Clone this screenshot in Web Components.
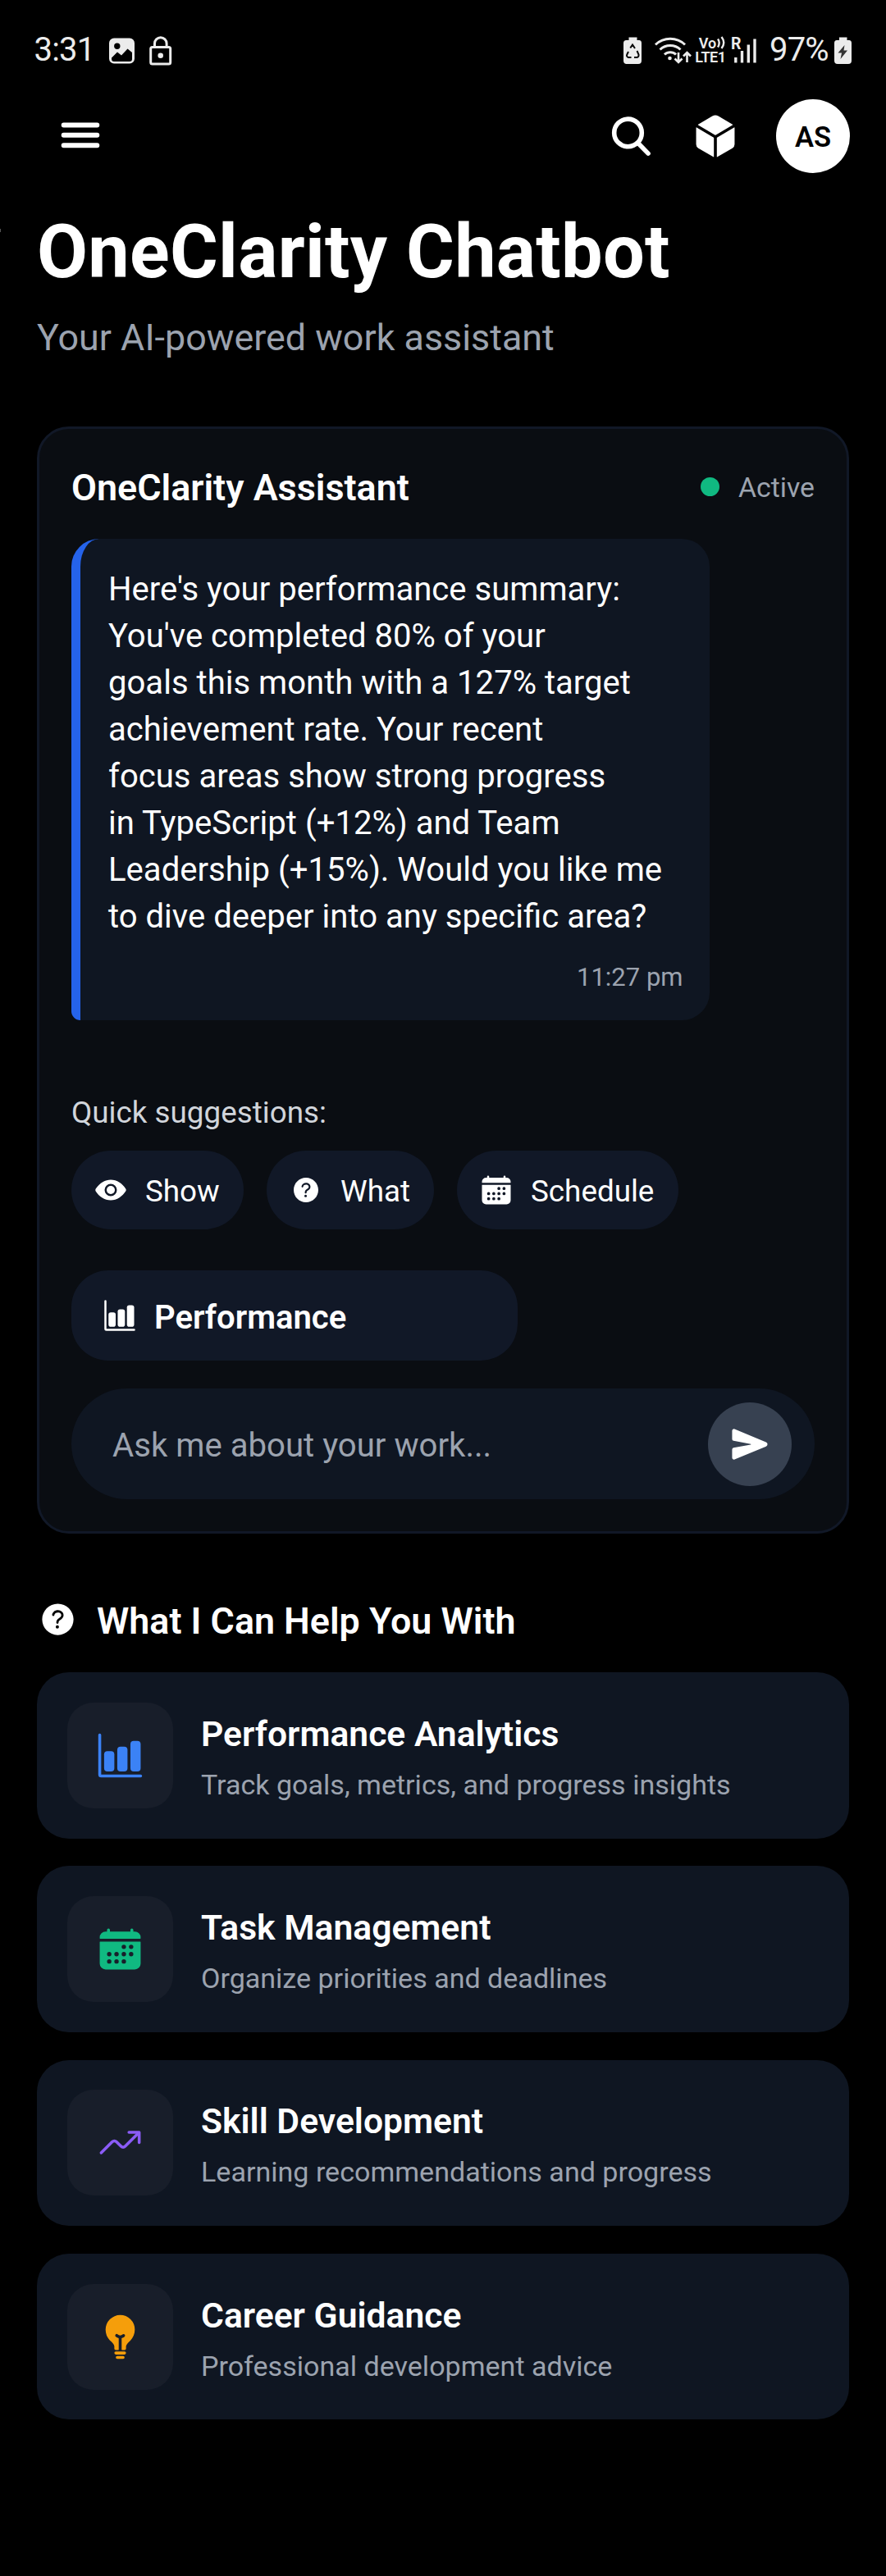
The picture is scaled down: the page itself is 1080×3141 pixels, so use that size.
<!DOCTYPE html>
<html lang="en">
<head>
<meta charset="utf-8">
<title>OneClarity Chatbot</title>
<style>
html{background:#000}
body{margin:0;width:1080px;height:3141px;background:#000;color:#fff;font-family:Roboto,"Noto Sans",sans-serif;overflow:hidden}
</style>
</head>
<body>
<oc-app></oc-app>
<script>
const ION={
calendar:'<path fill-rule="evenodd" d="M480 128a64 64 0 00-64-64h-16V48.45c0-8.61-6.62-16-15.23-16.43A16 16 0 00368 48v16H144V48.45c0-8.61-6.62-16-15.23-16.43A16 16 0 00112 48v16H96a64 64 0 00-64 64v12a4 4 0 004 4h440a4 4 0 004-4zM32 416a64 64 0 0064 64h320a64 64 0 0064-64V179a3 3 0 00-3-3H35a3 3 0 00-3 3z'+
 [[296,232],[376,232],[136,312],[216,312],[296,312],[376,312],[136,392],[216,392],[296,392]].map(([x,y])=>`M${x-24} ${y}a24 24 0 1048 0a24 24 0 10-48 0z`).join('')+'"/>',
chart:'<path d="M480 496H48a32 32 0 01-32-32V32a16 16 0 0132 0v432h432a16 16 0 010 32z"/><rect x="80" y="208" width="112" height="224" rx="36"/><rect x="224" y="160" width="112" height="272" rx="36"/><rect x="368" y="96" width="112" height="336" rx="36"/>',
trend:'<g fill="none" stroke="currentColor" stroke-width="32" stroke-linecap="round" stroke-linejoin="round"><path d="M352 144h112v112"/><path d="M48 368l121.37-121.37a32 32 0 0145.26 0l50.74 50.74a32 32 0 0045.26 0L448 160"/></g>',
bulb:'<path d="M288 464h-64a16 16 0 000 32h64a16 16 0 000-32zM304 416h-96a16 16 0 000 32h96a16 16 0 000-32zM369.42 62.69C339.35 32.58 299.07 16 256 16A159.62 159.62 0 0096 176c0 46.62 17.87 90.23 49 119.64l4.36 4.09C167.37 316.57 192 339.64 192 360v24a16 16 0 0016 16h24a8 8 0 008-8V274.82a8 8 0 00-5.13-7.47A130.73 130.73 0 01208.71 253a16 16 0 1118.58-26c7.4 5.24 21.65 13 28.71 13s21.31-7.78 28.73-13a16 16 0 0118.56 26 130.73 130.73 0 01-26.16 14.32 8 8 0 00-5.13 7.47V392a8 8 0 008 8h24a16 16 0 0016-16v-24c0-19.88 24.36-42.93 42.15-59.77l4.91-4.66C399.08 265 416 223.61 416 176a159.16 159.16 0 00-46.58-113.31z"/>',
help:'<path d="M256 64C150 64 64 150 64 256s86 192 192 192 192-86 192-192S362 64 256 64zm-6 304a20 20 0 1120-20 20 20 0 01-20 20zm33.44-102C267.23 276.88 265 286.85 265 296a14 14 0 01-28 0c0-21.91 10.08-39.33 30.82-53.26C287.1 229.8 298 221.6 298 203.57c0-12.26-7-21.57-21.49-28.46-3.41-1.62-11-3.2-20.34-3.09-11.72.15-20.82 2.95-27.83 8.59C215.12 191.25 214 202.83 214 203a14 14 0 11-28-1.35c.11-2.43 1.8-24.32 24.77-42.8 11.91-9.58 27.06-14.56 45-14.78 12.7-.15 24.63 2 32.72 5.82C312.7 161.34 326 180.43 326 203.57c0 33.83-22.61 49.02-42.56 62.43z"/>',
eye:'<circle cx="256" cy="256" r="64"/><path d="M490.84 238.6c-26.46-40.92-60.79-75.68-99.27-100.53C349 110.55 302 96 255.66 96c-42.52 0-84.33 12.15-124.27 36.11-40.73 24.43-77.63 60.12-109.68 106.07a31.92 31.92 0 00-.64 35.54c26.41 41.33 60.4 76.14 98.28 100.65C162 402 207.9 416 255.66 416c46.71 0 93.81-14.43 136.2-41.72 38.46-24.77 72.72-59.66 99.08-100.92a32.2 32.2 0 00-.1-34.76zM256 352a96 96 0 1196-96 96.11 96.11 0 01-96 96z"/>',
cube:'<path d="M440.9 136.3a4 4 0 000-6.91L288.16 40.65a64.14 64.14 0 00-64.33 0L71.12 129.39a4 4 0 000 6.91L254 243.88a4 4 0 004.06 0zM238.05 270.64L55 163a4 4 0 00-6 3.45v177.39a48 48 0 0023.84 41.39L234 479.48a4 4 0 006-3.45V274.08a4 4 0 00-1.95-3.44zM273.95 270.64a4 4 0 00-1.95 3.44v201.95a4 4 0 006 3.45l161.16-94.25A48 48 0 00463 343.84V166.46a4 4 0 00-6-3.45z"/>',
send:'<path d="M476.59 227.05l-.16-.07L49.35 49.84A23.56 23.56 0 0027.14 52 24.65 24.65 0 0016 72.59v113.29a24 24 0 0019.52 23.57l232.93 43.07a4 4 0 010 7.86L35.53 303.45A24 24 0 0016 327v113.31A23.57 23.57 0 0026.59 460a23.94 23.94 0 0013.22 4 24.55 24.55 0 009.52-1.93L476.4 285.94l.19-.09a32 32 0 000-58.8z"/>',
search:'<g fill="none" stroke="currentColor" stroke-width="50" stroke-linecap="round"><circle cx="220" cy="215" r="151"/><path d="M328 326L441 441"/></g>',
menu:'<g fill="none" stroke="currentColor" stroke-width="54" stroke-linecap="round"><path d="M70 132H442M70 245H442M70 359H442"/></g>'
};
function define(name,css,html){
  customElements.define(name,class extends HTMLElement{
    connectedCallback(){
      if(this.shadowRoot)return;
      this.attachShadow({mode:'open'}).innerHTML=`<style>*{box-sizing:border-box}${css}</style>`+(typeof html==='function'?html(this):html);
    }
  });
}
define('oc-icon',':host{display:block;flex:none;width:var(--size,40px);height:var(--size,40px)}svg{display:block;width:100%;height:100%;fill:currentColor}',
 el=>`<svg viewBox="0 0 512 512">${ION[el.getAttribute('name')]}</svg>`);

define('oc-status-bar',`
:host{display:flex;height:121px;align-items:center;justify-content:space-between;padding:0 42px 0 41.5px;color:#ececec;font-size:40px;line-height:48px}
div{display:flex;align-items:center}
svg{display:block;flex:none;overflow:visible}
.time{letter-spacing:-.8px;width:91.5px}
.pct{letter-spacing:-.8px;width:79px;white-space:nowrap}
.net{display:flex;flex-direction:column;width:38px;height:34px;margin:0 7px 0 5.5px;font-weight:600;font-size:18px;line-height:17px;letter-spacing:-.4px}
.net b{font-weight:600;display:flex;align-items:center;height:17px;padding-left:4px;letter-spacing:0}
.net b svg{margin-left:1px}
.sig{width:30px;height:40px;margin-right:16px}
text{font-weight:700}
`,`
<div><span class="time">3:31</span>
<svg width="84" height="40" viewBox="0 0 84 40" fill="#ececec"><path fill-rule="evenodd" d="M6 5.500h19a6 6 0 016 6v19a6 6 0 01-6 6H6a6 6 0 01-6-6v-19a6 6 0 016-6zm3.800 6a3.700 3.700 0 100 7.400 3.700 3.700 0 000-7.400zM3 29.500v1.500q0 3 3 3h19q3 0 3-3V23l-5.500-4.500L15 26.500l-5-4z"/><g fill="none" stroke="#ececec" stroke-width="3"><rect x="50.700" y="16.500" width="24" height="20.500" rx="2"/><path d="M55.500 16.500v-4.500a7.300 7.300 0 0114.600 0v4.500"/></g><circle cx="62.700" cy="26.700" r="3.300"/></svg></div>
<div>
<svg width="82" height="40" viewBox="0 0 82 40" fill="#ececec">
<path d="M6.500 4.500h10v3.500H19q3 0 3 3.500V33q0 4-4 4H4q-4 0-4-4V11.500Q0 8 3.500 8h3z"/>
<g fill="none" stroke="#050505" stroke-width="2"><path d="M8.300 17.500l2.700-4 3 4.500M16.500 21l2 4.500q.5 3.500-3 3.500H13M9.500 29H6q-3-1-1.500-4l1.500-3"/></g>
<g fill="none" stroke="#ececec" stroke-width="3"><path d="M39 13.500a26 26 0 0136 0M44.500 19.500a18 18 0 0125 0M50 25.500a10 10 0 0114 0"/></g><circle cx="56.500" cy="30" r="2.300"/>
<g fill="none" stroke="#ececec" stroke-width="2.600"><path d="M67 23v11.500m-4.500-4l4.500 4.500 4.500-4.500M77.500 35V23.500m-4.500 4l4.500-4.500 4.500 4.500"/></g></svg>
<div class="net"><b>Vo<svg width="10" height="16" viewBox="0 0 10 16" fill="none" stroke="#ececec" stroke-width="2.400"><path d="M1 3.500q3.500 4.500 0 10M5.500 1q5.500 7 0 14"/></svg></b>LTE1</div>
<svg class="sig" viewBox="0 0 30 40" fill="#ececec">
<text x="-1" y="18.500" font-size="19.500">R</text>
<g fill="none" stroke="#ececec" stroke-width="3.400"><path d="M4.800 29v6.500M12.500 21v14.500M20.300 13.500v22M28 6.500v29"/></g></svg>
<span class="pct">97%</span>
<svg width="21" height="40" viewBox="0 0 21 40"><path fill="#ececec" d="M6 4.500h9.500V8H18q3 0 3 3.500V33q0 4-4 4H4q-4 0-4-4V11.500Q0 8 3 8h3z"/><path fill="#333" d="M12.500 14L4.500 23.500h4.500L7.500 31 16 20.500h-4.500z"/></svg>
</div>`);

define('oc-app-bar',`
:host{display:flex;height:90px;align-items:center;justify-content:space-between;padding:0 44px 0 70px}
nav{display:flex;align-items:center;gap:45px}
.s{--size:57px}.c{--size:58px}
.avatar{width:90px;height:90px;border-radius:50%;background:#fff;color:#000;font-weight:600;font-size:34.500px;display:flex;align-items:center;justify-content:center;padding-top:2px}
`,`<oc-icon name="menu" style="--size:56px"></oc-icon><nav><oc-icon class="s" name="search"></oc-icon><oc-icon class="c" name="cube"></oc-icon><div class="avatar">AS</div></nav>`);

define('oc-page-title',`
:host{display:block;padding:44px 0 82px 45px}
h1{margin:0;font-size:90px;line-height:105px;font-weight:700;letter-spacing:.28px}
p{margin:25px 0 0;font-size:44.850px;line-height:53px;color:#9ca3af}
`,`<h1><slot name="title"></slot></h1><p><slot></slot></p>`);

define('oc-message',`
:host{display:block;margin-top:37px;width:778px;height:587px;background:#0f1622;border-left:11px solid #2563eb;border-radius:33.750px 33.750px 33.750px 11px;padding:33px 32.500px 0 34px}
.body{font-size:40.100px;line-height:57px;color:#fff;white-space:nowrap}
.time{margin-top:28px;font-size:31px;line-height:36px;text-align:right;color:#9ca3af}
`,el=>`<div class="body"><slot></slot></div><div class="time">${el.getAttribute('time')}</div>`);

define('oc-chip',`
:host{display:flex;align-items:center;height:96px;width:var(--w);border-radius:48px;background:#111827;padding-left:28px;gap:22px;color:#fff;font-size:36.800px;line-height:44px;white-space:nowrap}
:host([large]){height:110px;border-radius:45px;padding-left:39px;font-size:40.100px;font-weight:600}
span{padding-top:4px}:host([large]) span{padding-top:5px}
`,el=>`<oc-icon name="${el.getAttribute('icon')}"></oc-icon><span><slot></slot></span>`);

define('oc-composer',`
:host{display:flex;align-items:center;justify-content:space-between;margin-top:34px;height:135px;border-radius:67.500px;background:#0f1622;padding:0 28px 0 50px;font-size:40.150px;line-height:48px;color:#9ca3af}
span{padding-top:4px}
.send{width:102px;height:102px;border-radius:50%;background:#374151;color:#fff;display:flex;align-items:center;justify-content:center}
`,`<span><slot></slot></span><div class="send"><oc-icon name="send" style="--size:46px"></oc-icon></div>`);

define('oc-assistant-card',`
:host{display:block;box-sizing:border-box;margin:0 45px;height:1350px;border:3px solid #111827;border-radius:39px;background:#0a0d12;padding:44px 39px 0}
header{display:flex;justify-content:space-between;align-items:center;height:53px}
h2{margin:0;padding-top:1px;font-size:44.900px;line-height:53px;font-weight:600}
.state{display:flex;align-items:center;gap:23px;font-size:33.750px;line-height:40px;color:#9ca3af}
.state i{width:23px;height:23px;border-radius:50%;background:#10b981}
.state span{padding-top:2px}
.label{margin-top:91px;font-size:36.800px;line-height:44px;color:#d1d5db}
.chips{display:flex;gap:28px;margin:24px 0 50px}
`,`<header><h2>OneClarity Assistant</h2><div class="state"><i></i><span>Active</span></div></header>
<oc-message time="11:27 pm">Here's your performance summary:<br>You've completed 80% of your<br>goals this month with a 127% target<br>achievement rate. Your recent<br>focus areas show strong progress<br>in TypeScript (+12%) and Team<br>Leadership (+15%). Would you like me<br>to dive deeper into any specific area?</oc-message>
<div class="label">Quick suggestions:</div>
<div class="chips"><oc-chip icon="eye" style="--w:210px">Show</oc-chip><oc-chip icon="help" style="--w:204px">What</oc-chip><oc-chip icon="calendar" style="--w:270px">Schedule</oc-chip></div>
<oc-chip large icon="chart" style="--w:544px">Performance</oc-chip>
<oc-composer>Ask me about your work...</oc-composer>`);

define('oc-help-item',`
:host{display:flex;align-items:center;height:202.500px;border-radius:39px;background:#0f1622;padding-left:37px}
.tile{flex:none;width:129px;height:129px;border-radius:32px;background:#181e2a;display:flex;align-items:center;justify-content:center;--size:57px}
.t{margin-left:34px;padding-top:5px}
h3{margin:0;font-size:42.650px;line-height:53px;font-weight:600;color:#fff}
p{margin:13px 0 0;font-size:34.050px;line-height:44px;color:#9ca3af}
`,el=>`<div class="tile" style="color:${el.getAttribute('color')}"><oc-icon name="${el.getAttribute('icon')}"></oc-icon></div><div class="t"><h3>${el.getAttribute('heading')}</h3><p><slot></slot></p></div>`);

define('oc-help-section',`
:host{display:block;padding:80px 45px 0}
header{display:flex;align-items:center;gap:22px;height:53px;margin-bottom:36px}
header oc-icon{--size:51px;margin-top:-5px}
h2{margin:0;font-size:44.800px;line-height:53px;font-weight:600}
.list{display:flex;flex-direction:column;gap:33.750px}
`,`<header><oc-icon name="help"></oc-icon><h2>What I Can Help You With</h2></header><div class="list"><slot></slot></div>`);

define('oc-app',`
:host{display:block;position:relative}
.edge{position:absolute;left:0;top:279px;width:1px;height:4px;background:#555}
`,`<oc-status-bar></oc-status-bar><oc-app-bar></oc-app-bar>
<oc-page-title><span slot="title">OneClarity Chatbot</span>Your AI-powered work assistant</oc-page-title>
<oc-assistant-card></oc-assistant-card>
<oc-help-section>
<oc-help-item icon="chart" color="#3b82f6" heading="Performance Analytics">Track goals, metrics, and progress insights</oc-help-item>
<oc-help-item icon="calendar" color="#10b981" heading="Task Management">Organize priorities and deadlines</oc-help-item>
<oc-help-item icon="trend" color="#8b5cf6" heading="Skill Development">Learning recommendations and progress</oc-help-item>
<oc-help-item icon="bulb" color="#f59e0b" heading="Career Guidance">Professional development advice</oc-help-item>
</oc-help-section>
<div class="edge"></div>`);
</script>
</body>
</html>
